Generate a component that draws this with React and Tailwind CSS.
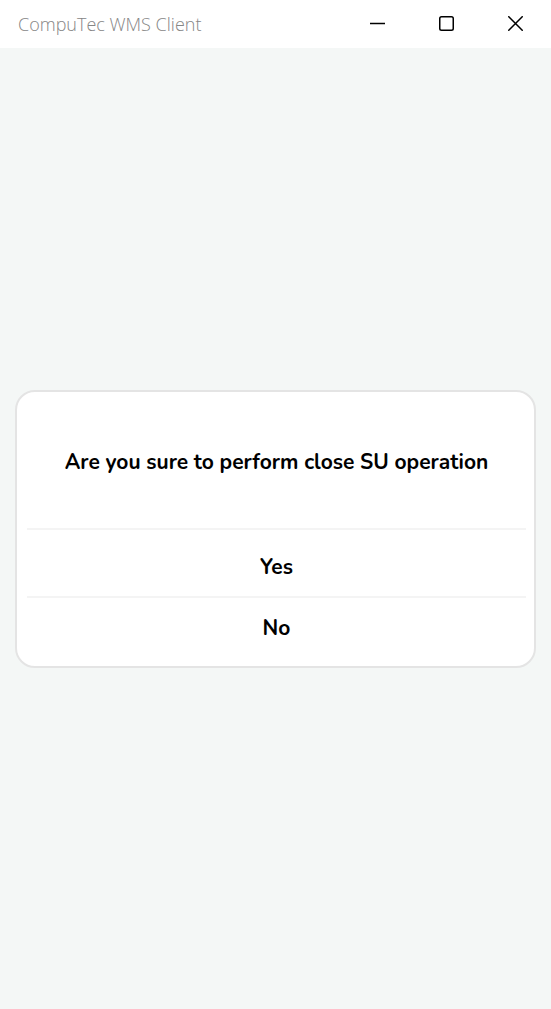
export default function App() {
  return (
    <div className="flex min-h-screen flex-col bg-[#f4f7f6] text-black">
      <header className="flex h-12 items-center justify-between bg-white pl-[18px]">
        <h1 className="font-['Open_Sans','Noto_Sans',sans-serif] text-lg font-light text-[#868686]">CompuTec WMS Client</h1>
        <div className="flex h-full pr-px pb-px">
          <button type="button" aria-label="Minimize" className="flex w-[69px] items-center justify-center">
            <svg className="size-[15px]" viewBox="0 0 15 15" fill="none" stroke="currentColor" strokeWidth="1.5"><path d="M0 7.5H15" /></svg>
          </button>
          <button type="button" aria-label="Maximize" className="flex w-[69px] items-center justify-center">
            <svg className="size-[15px]" viewBox="0 0 15 15" fill="none" stroke="currentColor" strokeWidth="1.5"><rect x="0.75" y="0.75" width="13.5" height="13.5" rx="1.75" /></svg>
          </button>
          <button type="button" aria-label="Close" className="flex w-[69px] items-center justify-center">
            <svg className="size-[15px]" viewBox="0 0 15 15" fill="none" stroke="currentColor" strokeWidth="1.5"><path d="M0.25 0.25 14.75 14.75M14.75 0.25 0.25 14.75" /></svg>
          </button>
        </div>
      </header>
      <main className="flex flex-1 items-center justify-center px-[15px] font-['Nunito','Open_Sans',sans-serif]">
        <section role="dialog" aria-labelledby="question" className="w-full rounded-[20px] border-2 border-[#e4e4e4] bg-white pr-2 pb-2 pl-[10px] text-center text-[21px] font-bold">
          <h2 id="question" className="flex h-[136px] items-center justify-center pt-1.5">Are you sure to perform close SU operation</h2>
          <button type="button" className="h-[68px] w-full border-t-2 border-[#f4f4f4] pt-2.5">Yes</button>
          <button type="button" className="h-[62px] w-full border-t-2 border-[#f4f4f4] pt-0.5">No</button>
        </section>
      </main>
    </div>
  );
}
